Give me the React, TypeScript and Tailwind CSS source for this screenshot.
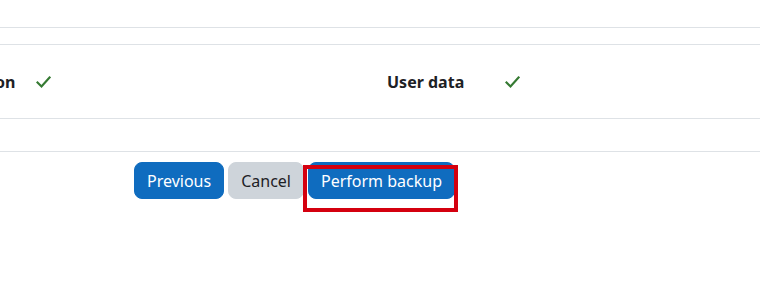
import React from 'react'

function Check() {
  return (
    <svg width="15" height="14" viewBox="0 0 15 14" className="shrink-0">
      <polyline points="1.5,7.5 5.5,11.5 13.5,2.5" fill="none" stroke="#357a32" strokeWidth="2.2" strokeLinecap="square" />
    </svg>
  )
}

function Setting({ label }: { label: string }) {
  return (
    <div className="flex items-center w-[469px] shrink-0">
      <span className="w-[118px] shrink-0 font-bold text-[#1d2125] whitespace-nowrap">{label}</span>
      <Check />
    </div>
  )
}

export default function App() {
  return (
    <div
      className="relative w-[760px] h-[302px] overflow-hidden bg-white text-[16px] leading-[1.5] text-[#1d2125]"
      style={{ fontFamily: '"Noto Sans", "Open Sans", sans-serif' }}
    >
      <div className="h-[27px]" />
      <div className="border-t border-[#dee2e6] h-[17px]" />
      <div className="border-t border-[#dee2e6] h-[74px] flex items-center">
        <div className="flex ml-[-82px] pt-[1px]">
          <Setting label="Information" />
          <Setting label="User data" />
        </div>
      </div>
      <div className="border-t border-[#dee2e6] h-[33px]" />
      <div className="border-t border-[#dee2e6]" />
      <div className="flex gap-1 ml-[134px] mt-[10px]">
        <button className="bg-[#0f6cbf] text-white rounded-lg px-3 py-[5.5px] border border-[#0f6cbf]">Previous</button>
        <button className="bg-[#ced4da] text-[#1d2125] rounded-lg px-3 py-[5.5px] border border-[#ced4da]">Cancel</button>
        <button className="bg-[#0f6cbf] text-white rounded-lg px-3 py-[5.5px] border border-[#0f6cbf]">Perform backup</button>
      </div>
      <div className="absolute left-[303px] top-[165px] w-[155px] h-[47px] border-4 border-[#d4000f]" />
    </div>
  )
}
